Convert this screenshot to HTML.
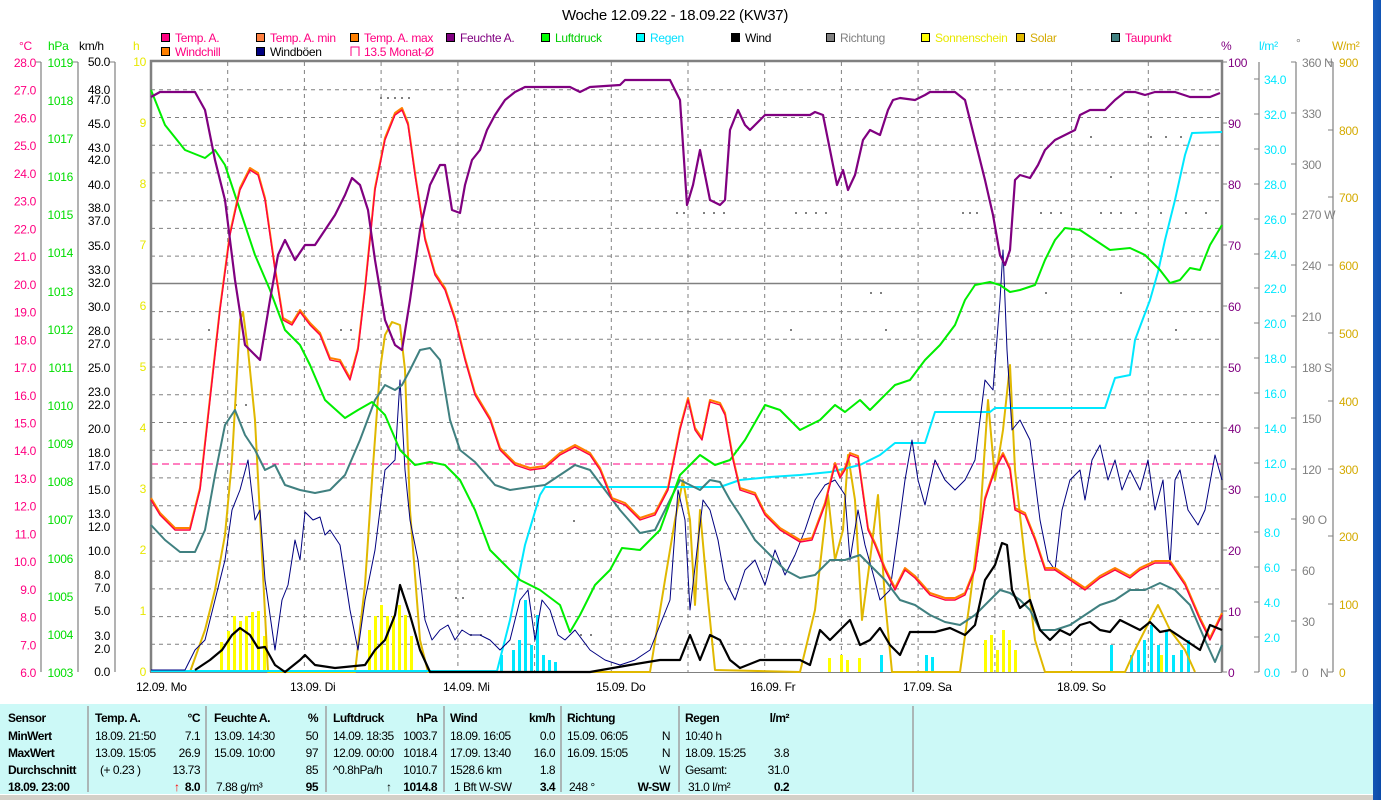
<!DOCTYPE html>
<html><head><meta charset="utf-8"><style>
html,body{margin:0;padding:0;width:1381px;height:800px;overflow:hidden;background:#fff}
svg{position:absolute;left:0;top:0}
text{font-family:"Liberation Sans",sans-serif;font-size:12px;letter-spacing:-0.3px}
.t text{letter-spacing:-0.5px}
</style></head><body>
<svg width="1381" height="800" viewBox="0 0 1381 800" xmlns="http://www.w3.org/2000/svg">
<defs><linearGradient id="bl" x1="0" y1="0" x2="1" y2="1"><stop offset="0" stop-color="#1a5fc0"/><stop offset="1" stop-color="#0a4aa8"/></linearGradient></defs>
<rect x="1373" y="0" width="8" height="800" fill="url(#bl)"/>
<text x="675" y="20" text-anchor="middle" style="font-size:15px">Woche 12.09.22 - 18.09.22 (KW37)</text>
<g stroke="#000" stroke-width="1">
<rect x="161.5" y="33.5" width="8" height="8" fill="#ff0080"/>
<rect x="256.5" y="33.5" width="8" height="8" fill="#ff8040"/>
<rect x="350.5" y="33.5" width="8" height="8" fill="#ff8000"/>
<rect x="446.5" y="33.5" width="8" height="8" fill="#800080"/>
<rect x="541.5" y="33.5" width="8" height="8" fill="#00ff00"/>
<rect x="636.5" y="33.5" width="8" height="8" fill="#00ffff"/>
<rect x="731.5" y="33.5" width="8" height="8" fill="#000"/>
<rect x="826.5" y="33.5" width="8" height="8" fill="#808080"/>
<rect x="921.5" y="33.5" width="8" height="8" fill="#ffff00"/>
<rect x="1016.5" y="33.5" width="8" height="8" fill="#e0b800"/>
<rect x="1111.5" y="33.5" width="8" height="8" fill="#408080"/>
<rect x="161.5" y="47.5" width="8" height="8" fill="#ff8000"/>
<rect x="256.5" y="47.5" width="8" height="8" fill="#000080"/>
</g>
<path d="M351 56V47h8v9" fill="none" stroke="#ff0080"/>
<g>
<text x="175" y="42" fill="#ff0080">Temp. A.</text>
<text x="270" y="42" fill="#ff0080">Temp. A. min</text>
<text x="364" y="42" fill="#ff0080">Temp. A. max</text>
<text x="460" y="42" fill="#800080">Feuchte A.</text>
<text x="555" y="42" fill="#00cc00">Luftdruck</text>
<text x="650" y="42" fill="#00e0ff">Regen</text>
<text x="745" y="42" fill="#000">Wind</text>
<text x="840" y="42" fill="#808080">Richtung</text>
<text x="935" y="42" fill="#e8e800">Sonnenschein</text>
<text x="1030" y="42" fill="#d4aa00">Solar</text>
<text x="1125" y="42" fill="#ff0080">Taupunkt</text>
<text x="175" y="56" fill="#ff0080">Windchill</text>
<text x="270" y="56" fill="#000">Windböen</text>
<text x="364" y="56" fill="#ff0080">13.5 Monat-Ø</text>
</g>
<text x="19" y="50" fill="#ff0080">°C</text>
<text x="48" y="50" fill="#00dd00">hPa</text>
<text x="79" y="50" fill="#000">km/h</text>
<text x="133" y="50" fill="#e8e800">h</text>
<text x="1221" y="50" fill="#800080">%</text>
<text x="1259" y="50" fill="#00e0ff">l/m²</text>
<text x="1296" y="47" fill="#808080">°</text>
<text x="1332" y="50" fill="#d4aa00">W/m²</text>
<g stroke="#808080" stroke-dasharray="4,4" stroke-width="1">
<path d="M151 89.7H1222M151 117.5H1222M151 145.2H1222M151 172.9H1222M151 200.7H1222M151 228.4H1222M151 256.1H1222M151 311.6H1222M151 339.3H1222M151 367H1222M151 394.8H1222M151 422.5H1222M151 450.2H1222M151 477.9H1222M151 505.7H1222M151 533.4H1222M151 561.1H1222M151 588.9H1222M151 616.6H1222M151 644.3H1222"/>
<path d="M227.7 62V672M304.4 62V672M381.1 62V672M457.9 62V672M534.6 62V672M611.3 62V672M688 62V672M764.7 62V672M841.4 62V672M918.1 62V672M994.9 62V672M1071.6 62V672M1148.3 62V672"/>
</g>
<path d="M151 283.5H1222" stroke="#808080" stroke-width="1.5"/>
<path d="M151 464H1222" stroke="#ff0080" stroke-dasharray="7,4" stroke-width="1"/>
<path d="M151 672V61H1222V672" fill="none" stroke="#808080" stroke-width="2.5"/>
<path d="M150 672.5H1222" stroke="#808080" stroke-width="1"/>
<g stroke="#808080" stroke-width="1.2" fill="none">
<path d="M41 62V672M78 62V672M115 62V672M1259 62V672M1296 62V672M1333 62V672"/>
</g>
<g fill="#ff0080" text-anchor="end">
<text x="36" y="67">28.0</text><text x="36" y="94.7">27.0</text><text x="36" y="122.5">26.0</text><text x="36" y="150.2">25.0</text><text x="36" y="177.9">24.0</text><text x="36" y="205.7">23.0</text><text x="36" y="233.4">22.0</text><text x="36" y="261.1">21.0</text><text x="36" y="288.8">20.0</text><text x="36" y="316.6">19.0</text><text x="36" y="344.3">18.0</text><text x="36" y="372">17.0</text><text x="36" y="399.8">16.0</text><text x="36" y="427.5">15.0</text><text x="36" y="455.2">14.0</text><text x="36" y="482.9">13.0</text><text x="36" y="510.7">12.0</text><text x="36" y="538.4">11.0</text><text x="36" y="566.1">10.0</text><text x="36" y="593.9">9.0</text><text x="36" y="621.6">8.0</text><text x="36" y="649.3">7.0</text><text x="36" y="677">6.0</text>
</g>
<g fill="#00dd00" text-anchor="end">
<text x="73" y="67">1019</text><text x="73" y="105">1018</text><text x="73" y="143">1017</text><text x="73" y="181">1016</text><text x="73" y="219">1015</text><text x="73" y="257">1014</text><text x="73" y="296">1013</text><text x="73" y="334">1012</text><text x="73" y="372">1011</text><text x="73" y="410">1010</text><text x="73" y="448">1009</text><text x="73" y="486">1008</text><text x="73" y="524">1007</text><text x="73" y="563">1006</text><text x="73" y="601">1005</text><text x="73" y="639">1004</text><text x="73" y="677">1003</text>
</g>
<g fill="#000" text-anchor="end" style="font-size:11px">
<text x="110" y="66">50.0</text><text x="110" y="94">48.0</text><text x="110" y="104">47.0</text><text x="110" y="128">45.0</text><text x="110" y="152">43.0</text><text x="110" y="164">42.0</text><text x="110" y="189">40.0</text><text x="110" y="212">38.0</text><text x="110" y="225">37.0</text><text x="110" y="250">35.0</text><text x="110" y="274">33.0</text><text x="110" y="287">32.0</text><text x="110" y="311">30.0</text><text x="110" y="335">28.0</text><text x="110" y="348">27.0</text><text x="110" y="372">25.0</text><text x="110" y="396">23.0</text><text x="110" y="409">22.0</text><text x="110" y="433">20.0</text><text x="110" y="457">18.0</text><text x="110" y="470">17.0</text><text x="110" y="494">15.0</text><text x="110" y="518">13.0</text><text x="110" y="531">12.0</text><text x="110" y="555">10.0</text><text x="110" y="579">8.0</text><text x="110" y="592">7.0</text><text x="110" y="615">5.0</text><text x="110" y="640">3.0</text><text x="110" y="653">2.0</text><text x="110" y="676">0.0</text>
</g>
<g fill="#e8e800" text-anchor="end" style="font-size:11px">
<text x="146" y="66">10</text><text x="146" y="127">9</text><text x="146" y="188">8</text><text x="146" y="249">7</text><text x="146" y="310">6</text><text x="146" y="371">5</text><text x="146" y="432">4</text><text x="146" y="493">3</text><text x="146" y="554">2</text><text x="146" y="615">1</text><text x="146" y="676">0</text>
</g>
<g fill="#800080">
<text x="1228" y="67">100</text><text x="1228" y="128">90</text><text x="1228" y="189">80</text><text x="1228" y="250">70</text><text x="1228" y="311">60</text><text x="1228" y="372">50</text><text x="1228" y="433">40</text><text x="1228" y="494">30</text><text x="1228" y="555">20</text><text x="1228" y="616">10</text><text x="1228" y="677">0</text>
</g>
<g stroke="#808080" stroke-width="1"><path d="M1222 62h5M1222 123h5M1222 184h5M1222 245h5M1222 306h5M1222 367h5M1222 428h5M1222 489h5M1222 550h5M1222 611h5M1222 672h5"/></g>
<g fill="#00e8ff">
<text x="1264" y="84">34.0</text><text x="1264" y="119">32.0</text><text x="1264" y="154">30.0</text><text x="1264" y="189">28.0</text><text x="1264" y="224">26.0</text><text x="1264" y="259">24.0</text><text x="1264" y="293">22.0</text><text x="1264" y="328">20.0</text><text x="1264" y="363">18.0</text><text x="1264" y="398">16.0</text><text x="1264" y="433">14.0</text><text x="1264" y="468">12.0</text><text x="1264" y="502">10.0</text><text x="1264" y="537">8.0</text><text x="1264" y="572">6.0</text><text x="1264" y="607">4.0</text><text x="1264" y="642">2.0</text><text x="1264" y="677">0.0</text>
</g>
<g fill="#808080">
<text x="1302" y="67">360 N</text><text x="1302" y="118">330</text><text x="1302" y="169">300</text><text x="1302" y="219">270 W</text><text x="1302" y="270">240</text><text x="1302" y="321">210</text><text x="1302" y="372">180 S</text><text x="1302" y="423">150</text><text x="1302" y="474">120</text><text x="1302" y="524">90 O</text><text x="1302" y="575">60</text><text x="1302" y="626">30</text><text x="1302" y="677">0</text><text x="1320" y="677">N</text>
</g>
<g fill="#d4aa00">
<text x="1339" y="67">900</text><text x="1339" y="135">800</text><text x="1339" y="202">700</text><text x="1339" y="270">600</text><text x="1339" y="338">500</text><text x="1339" y="406">400</text><text x="1339" y="474">300</text><text x="1339" y="541">200</text><text x="1339" y="609">100</text><text x="1339" y="677">0</text>
</g>
<g stroke="#808080" stroke-width="1"><path d="M1254 79h5M1254 114h5M1254 149h5M1254 184h5M1254 219h5M1254 254h5M1254 288h5M1254 323h5M1254 358h5M1254 393h5M1254 428h5M1254 463h5M1254 497h5M1254 532h5M1254 567h5M1254 602h5M1254 637h5M1254 672h5M1291 62h5M1291 113h5M1291 164h5M1291 214h5M1291 265h5M1291 316h5M1291 367h5M1291 418h5M1291 469h5M1291 519h5M1291 570h5M1291 621h5M1291 672h5M1328 62h5M1328 130h5M1328 197h5M1328 265h5M1328 333h5M1328 401h5M1328 469h5M1328 536h5M1328 604h5M1328 672h5M36 62h5M73 62h5M110 62h5"/></g>
<g fill="#000">
<text x="136" y="691">12.09.  Mo</text><text x="290" y="691">13.09.  Di</text><text x="443" y="691">14.09.  Mi</text><text x="596" y="691">15.09.  Do</text><text x="750" y="691">16.09.  Fr</text><text x="903" y="691">17.09.  Sa</text><text x="1057" y="691">18.09.  So</text>
</g>
<g fill="#ffff00">
<rect x="220" y="642" width="3" height="30"/><rect x="227" y="631" width="3" height="41"/><rect x="233" y="616" width="3" height="56"/><rect x="239" y="621" width="3" height="51"/><rect x="245" y="616" width="3" height="56"/><rect x="251" y="612" width="3" height="60"/><rect x="257" y="611" width="3" height="61"/><rect x="263" y="636" width="3" height="36"/>
<rect x="368" y="630" width="3" height="42"/><rect x="374" y="616" width="3" height="56"/><rect x="380" y="605" width="3" height="67"/><rect x="386" y="616" width="3" height="56"/><rect x="392" y="616" width="3" height="56"/><rect x="398" y="605" width="3" height="67"/><rect x="404" y="615" width="3" height="57"/><rect x="410" y="636" width="3" height="36"/>
<rect x="828" y="658" width="3" height="14"/><rect x="840" y="655" width="3" height="17"/><rect x="846" y="660" width="3" height="12"/><rect x="858" y="658" width="3" height="14"/>
<rect x="984" y="640" width="3" height="32"/><rect x="990" y="635" width="3" height="37"/><rect x="996" y="650" width="3" height="22"/><rect x="1002" y="630" width="3" height="42"/><rect x="1008" y="640" width="3" height="32"/><rect x="1014" y="650" width="3" height="22"/>
<rect x="1150" y="648" width="3" height="24"/><rect x="1160" y="655" width="3" height="17"/>
</g>
<g fill="#00e8ff">
<rect x="500" y="655" width="3" height="17"/><rect x="512" y="650" width="3" height="22"/><rect x="518" y="640" width="3" height="32"/><rect x="524" y="600" width="3" height="72"/><rect x="530" y="645" width="3" height="27"/><rect x="536" y="615" width="3" height="57"/><rect x="542" y="655" width="3" height="17"/><rect x="548" y="660" width="3" height="12"/><rect x="554" y="662" width="3" height="10"/>
<rect x="880" y="655" width="3" height="17"/><rect x="925" y="655" width="3" height="17"/><rect x="931" y="657" width="3" height="15"/>
<rect x="1110" y="645" width="3" height="27"/><rect x="1130" y="655" width="3" height="17"/><rect x="1137" y="650" width="3" height="22"/><rect x="1143" y="640" width="3" height="32"/><rect x="1150" y="625" width="3" height="47"/><rect x="1157" y="645" width="3" height="27"/><rect x="1165" y="630" width="3" height="42"/><rect x="1172" y="655" width="3" height="17"/><rect x="1180" y="650" width="3" height="22"/><rect x="1187" y="640" width="3" height="32"/>
</g>
<g fill="#808080">
<rect x="380" y="97" width="2" height="2"/><rect x="387" y="97" width="2" height="2"/><rect x="394" y="97" width="2" height="2"/><rect x="401" y="97" width="2" height="2"/><rect x="408" y="97" width="2" height="2"/>
<rect x="676" y="212" width="2" height="2"/><rect x="683" y="212" width="2" height="2"/><rect x="703" y="212" width="2" height="2"/><rect x="713" y="212" width="2" height="2"/><rect x="723" y="212" width="2" height="2"/><rect x="795" y="212" width="2" height="2"/><rect x="805" y="212" width="2" height="2"/><rect x="815" y="212" width="2" height="2"/><rect x="825" y="212" width="2" height="2"/>
<rect x="962" y="212" width="2" height="2"/><rect x="969" y="212" width="2" height="2"/><rect x="976" y="212" width="2" height="2"/><rect x="1040" y="212" width="2" height="2"/><rect x="1050" y="212" width="2" height="2"/><rect x="1060" y="212" width="2" height="2"/><rect x="1100" y="212" width="2" height="2"/><rect x="1110" y="212" width="2" height="2"/><rect x="1120" y="212" width="2" height="2"/><rect x="1135" y="212" width="2" height="2"/><rect x="1160" y="212" width="2" height="2"/><rect x="1185" y="212" width="2" height="2"/><rect x="1205" y="212" width="2" height="2"/>
<rect x="1150" y="136" width="2" height="2"/><rect x="1165" y="136" width="2" height="2"/><rect x="1180" y="136" width="2" height="2"/><rect x="1110" y="176" width="2" height="2"/><rect x="1090" y="136" width="2" height="2"/>
<rect x="340" y="329" width="2" height="2"/><rect x="350" y="329" width="2" height="2"/><rect x="208" y="329" width="2" height="2"/><rect x="235" y="404" width="2" height="2"/><rect x="245" y="404" width="2" height="2"/><rect x="455" y="597" width="2" height="2"/><rect x="462" y="597" width="2" height="2"/><rect x="470" y="634" width="2" height="2"/><rect x="480" y="634" width="2" height="2"/><rect x="573" y="520" width="2" height="2"/><rect x="580" y="634" width="2" height="2"/><rect x="590" y="634" width="2" height="2"/>
<rect x="870" y="292" width="2" height="2"/><rect x="880" y="292" width="2" height="2"/><rect x="885" y="329" width="2" height="2"/><rect x="790" y="329" width="2" height="2"/><rect x="1045" y="292" width="2" height="2"/><rect x="1175" y="329" width="2" height="2"/><rect x="1120" y="292" width="2" height="2"/>
</g>
<g fill="none" stroke-linejoin="round">
<polyline stroke="#e0b800" stroke-width="2" points="190,672 205,630 215,590 225,535 232,460 240,320 243,312 248,350 255,420 262,555 268,672 355,672 365,585 372,480 380,370 385,335 392,322 400,325 405,370 410,510 420,640 428,672 650,672 665,580 675,520 683,480 690,520 695,605 700,510 708,600 715,670 800,672 815,610 828,495 835,560 843,530 848,455 855,500 862,620 870,560 878,495 885,600 892,672 960,672 970,600 980,520 988,400 995,480 1003,430 1010,365 1015,470 1025,560 1035,640 1045,672 1125,672 1135,650 1150,620 1158,605 1170,630 1185,650 1195,672"/>
<polyline stroke="#00e8ff" stroke-width="2" points="151,671 497,671 510,620 525,545 540,495 545,487 720,487 740,480 770,477 800,475 830,472 860,465 880,455 895,443 925,443 935,412 990,412 995,408 1105,408 1115,378 1130,375 1135,340 1150,300 1158,272 1165,240 1175,200 1185,155 1192,133 1222,132"/>
<polyline stroke="#000080" stroke-width="1" points="151,670 185,670 195,650 205,640 215,600 225,560 232,510 240,490 248,460 255,520 260,510 265,580 275,650 282,600 288,585 295,540 300,560 305,512 313,520 320,517 325,535 330,530 340,545 350,610 358,650 365,600 375,550 385,470 395,460 400,380 405,470 410,520 418,560 425,620 432,640 440,630 448,625 455,640 462,630 470,635 480,635 490,640 500,650 510,640 520,600 528,590 535,640 542,600 550,610 558,635 565,640 575,630 590,650 605,660 620,665 635,660 650,650 660,625 670,600 678,490 685,520 690,610 697,550 703,500 710,510 718,540 725,580 735,600 745,570 755,560 765,585 775,550 785,575 795,555 805,530 815,500 825,485 835,480 845,495 850,560 858,510 865,545 872,570 880,600 890,590 897,540 905,480 912,440 918,480 925,505 935,460 945,480 955,490 965,480 975,460 985,380 993,390 1000,300 1003,250 1007,350 1012,430 1020,420 1030,440 1040,520 1048,560 1055,570 1062,510 1070,480 1080,470 1085,500 1092,460 1100,445 1108,480 1115,460 1122,490 1130,470 1140,490 1148,460 1155,510 1163,480 1170,565 1175,480 1180,470 1188,510 1198,525 1205,510 1215,455 1222,480"/>
<polyline stroke="#408080" stroke-width="2" points="151,525 165,540 180,552 195,552 205,530 215,475 225,425 235,410 245,435 255,450 265,470 275,465 285,485 300,490 315,493 330,490 345,475 360,440 375,400 385,385 395,390 402,385 410,370 420,350 430,348 440,360 450,420 460,450 475,462 495,485 510,490 530,487 545,485 560,475 575,465 590,470 605,490 620,510 640,533 655,530 670,500 680,480 690,485 700,490 710,480 720,482 730,500 740,515 755,540 770,555 785,570 800,578 815,575 830,560 845,560 860,555 875,570 885,580 900,600 915,605 930,615 945,622 960,625 975,615 990,600 1000,590 1010,593 1020,600 1030,610 1040,630 1055,630 1070,625 1085,615 1100,605 1115,600 1130,590 1145,590 1160,583 1175,590 1190,605 1205,640 1215,662 1222,645"/>
<polyline stroke="#00ee00" stroke-width="2" points="151,90 165,125 185,150 205,158 215,150 225,165 240,210 255,255 270,290 285,330 300,345 310,365 325,400 345,418 358,410 372,402 385,415 400,450 415,465 430,462 445,465 460,480 475,510 490,550 505,565 520,580 540,590 560,605 570,632 580,615 595,585 610,570 622,548 640,550 660,530 680,475 700,455 715,465 730,460 745,440 765,405 780,410 800,430 820,420 835,405 845,412 860,400 870,410 880,400 895,385 910,380 925,360 940,345 955,325 965,300 975,285 990,282 1000,285 1010,292 1020,290 1035,285 1045,260 1055,240 1065,228 1080,230 1095,240 1110,250 1130,248 1145,255 1160,270 1170,283 1180,280 1190,268 1200,270 1210,245 1222,225"/>
<polyline stroke="#ff8000" stroke-width="2" transform="translate(0,-2)" points="151,500 160,515 175,530 190,530 200,490 210,400 220,310 230,235 240,190 250,170 258,175 265,200 275,270 283,320 292,325 300,312 310,325 320,335 330,360 340,362 350,380 358,350 365,290 375,190 385,140 395,115 402,110 408,125 415,175 425,240 435,275 445,290 455,320 465,360 475,395 490,420 500,450 515,465 530,470 545,468 560,455 575,447 590,455 600,470 612,500 625,505 640,520 655,515 668,490 680,430 688,400 695,430 702,440 710,402 720,405 725,415 733,460 740,490 755,495 765,515 780,530 800,542 812,540 825,505 835,465 840,478 845,470 850,455 858,458 868,530 875,545 885,570 895,590 905,570 915,578 930,595 945,600 955,600 965,595 975,570 985,500 995,470 1003,455 1010,470 1015,510 1025,515 1035,540 1045,570 1055,570 1070,580 1085,590 1100,578 1115,570 1130,578 1140,570 1155,563 1170,563 1185,585 1200,620 1210,640 1222,615"/>
<polyline stroke="#ff0040" stroke-width="1.4" points="151,500 160,515 175,530 190,530 200,490 210,400 220,310 230,235 240,190 250,170 258,175 265,200 275,270 283,320 292,325 300,312 310,325 320,335 330,360 340,362 350,380 358,350 365,290 375,190 385,140 395,115 402,110 408,125 415,175 425,240 435,275 445,290 455,320 465,360 475,395 490,420 500,450 515,465 530,470 545,468 560,455 575,447 590,455 600,470 612,500 625,505 640,520 655,515 668,490 680,430 688,400 695,430 702,440 710,402 720,405 725,415 733,460 740,490 755,495 765,515 780,530 800,542 812,540 825,505 835,465 840,478 845,470 850,455 858,458 868,530 875,545 885,570 895,590 905,570 915,578 930,595 945,600 955,600 965,595 975,570 985,500 995,470 1003,455 1010,470 1015,510 1025,515 1035,540 1045,570 1055,570 1070,580 1085,590 1100,578 1115,570 1130,578 1140,570 1155,563 1170,563 1185,585 1200,620 1210,640 1222,615"/>
<polyline stroke="#800080" stroke-width="2.2" points="151,97 160,92 195,92 205,110 215,160 225,200 235,280 245,345 260,360 270,300 278,255 285,240 295,260 305,245 315,245 325,230 335,215 345,195 352,178 360,185 368,210 375,260 385,320 395,345 402,350 410,300 420,230 430,185 440,165 445,165 452,210 460,213 465,185 472,160 480,150 487,130 495,115 505,100 515,92 525,87 570,87 580,92 590,87 620,85 625,80 670,80 680,100 687,205 693,185 700,150 705,175 710,200 720,205 725,200 730,130 738,110 745,125 750,130 760,120 765,115 810,115 815,112 823,115 830,150 837,185 843,170 848,190 855,175 863,140 870,130 880,135 888,110 893,100 900,98 915,100 925,95 930,92 955,92 965,100 975,140 985,180 993,215 1000,255 1005,265 1010,250 1015,180 1020,175 1030,178 1038,165 1045,150 1055,140 1065,135 1075,130 1080,115 1090,110 1105,110 1115,100 1125,92 1135,92 1145,95 1155,92 1175,92 1190,97 1210,97 1220,93"/>
<polyline stroke="#000" stroke-width="2.2" points="195,670 210,660 222,650 232,635 240,628 250,635 258,648 265,647 275,665 285,672 300,660 305,655 315,665 335,668 365,665 375,650 385,640 395,615 400,585 410,615 420,650 430,672 590,672 630,665 660,660 680,660 690,635 700,660 710,635 720,640 730,660 740,668 760,660 800,660 810,665 820,630 830,640 840,630 850,620 860,645 870,640 880,628 890,645 900,655 910,632 935,632 950,628 965,635 975,625 985,580 995,565 1002,543 1007,545 1012,590 1020,608 1030,600 1040,630 1050,640 1060,630 1070,635 1080,625 1090,622 1100,630 1110,632 1120,620 1130,625 1140,630 1150,622 1160,632 1170,630 1185,640 1200,650 1210,625 1222,630"/>
</g>
<rect x="0" y="704" width="1373" height="90" fill="#ccf9f7"/>
<rect x="0" y="794" width="1373" height="6" fill="#d4d0c8"/>
<path d="M0 794.5H1373" stroke="#fff"/>
<g stroke="#a0a0a0" stroke-width="1.5"><path d="M88 706V792M206 706V792M326 706V792M444 706V792M561 706V792M679 706V792M913 706V792"/></g>
<g class="t">
<g fill="#000" style="font-weight:bold;font-size:11.5px">
<text x="8" y="722">Sensor</text><text x="8" y="740">MinWert</text><text x="8" y="757">MaxWert</text><text x="8" y="774">Durchschnitt</text><text x="8" y="791">18.09. 23:00</text>
<text x="95" y="722">Temp. A.</text><text x="200" y="722" text-anchor="end">°C</text>
<text x="214" y="722">Feuchte A.</text><text x="318" y="722" text-anchor="end">%</text>
<text x="333" y="722">Luftdruck</text><text x="437" y="722" text-anchor="end">hPa</text>
<text x="450" y="722">Wind</text><text x="555" y="722" text-anchor="end">km/h</text>
<text x="567" y="722">Richtung</text>
<text x="685" y="722">Regen</text><text x="789" y="722" text-anchor="end">l/m²</text>
<text x="200" y="791" text-anchor="end">8.0</text><text x="318" y="791" text-anchor="end">95</text><text x="437" y="791" text-anchor="end">1014.8</text><text x="555" y="791" text-anchor="end">3.4</text><text x="670" y="791" text-anchor="end">W-SW</text><text x="789" y="791" text-anchor="end">0.2</text>
</g>
<text x="174" y="791" fill="#ff0000" style="font-weight:bold;font-size:12px">↑</text>
<text x="386" y="791" fill="#000" style="font-weight:bold;font-size:12px">↑</text>
<g fill="#000" style="font-size:11px">
<text x="95" y="740">18.09.  21:50</text><text x="200" y="740" text-anchor="end">7.1</text>
<text x="95" y="757">13.09.  15:05</text><text x="200" y="757" text-anchor="end">26.9</text>
<text x="100" y="774">(+ 0.23 )</text><text x="200" y="774" text-anchor="end">13.73</text>
<text x="214" y="740">13.09.  14:30</text><text x="318" y="740" text-anchor="end">50</text>
<text x="214" y="757">15.09.  10:00</text><text x="318" y="757" text-anchor="end">97</text>
<text x="318" y="774" text-anchor="end">85</text><text x="216" y="791">7.88 g/m³</text>
<text x="333" y="740">14.09.  18:35</text><text x="437" y="740" text-anchor="end">1003.7</text>
<text x="333" y="757">12.09.  00:00</text><text x="437" y="757" text-anchor="end">1018.4</text>
<text x="333" y="774">^0.8hPa/h</text><text x="437" y="774" text-anchor="end">1010.7</text>
<text x="450" y="740">18.09.  16:05</text><text x="555" y="740" text-anchor="end">0.0</text>
<text x="450" y="757">17.09.  13:40</text><text x="555" y="757" text-anchor="end">16.0</text>
<text x="450" y="774">1528.6 km</text><text x="555" y="774" text-anchor="end">1.8</text>
<text x="454" y="791">1 Bft W-SW</text>
<text x="567" y="740">15.09.  06:05</text><text x="670" y="740" text-anchor="end">N</text>
<text x="567" y="757">16.09.  15:05</text><text x="670" y="757" text-anchor="end">N</text>
<text x="670" y="774" text-anchor="end">W</text><text x="569" y="791">248 °</text>
<text x="685" y="740">10:40 h</text>
<text x="685" y="757">18.09.  15:25</text><text x="789" y="757" text-anchor="end">3.8</text>
<text x="685" y="774">Gesamt:</text><text x="789" y="774" text-anchor="end">31.0</text>
<text x="688" y="791">31.0 l/m²</text>
</g>
</g>
</svg>
</body></html>
